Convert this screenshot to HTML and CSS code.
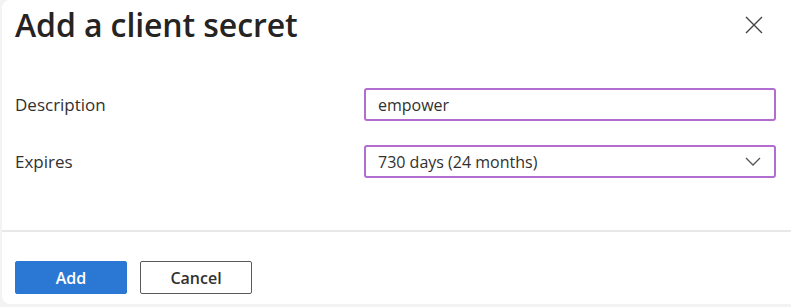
FILE: index.html
```html
<!DOCTYPE html>
<html>
<head>
<meta charset="utf-8">
<link rel="stylesheet" href="styles.css">
</head>
<body>
<div class="panel">
  <div class="header">
    <h1 class="title">Add a client secret</h1>
    <button class="close" aria-label="Close">
      <svg width="18" height="18" viewBox="0 0 18 18"><path d="M1 1 L17 17 M17 1 L1 17" stroke="#444" stroke-width="1.4" fill="none"/></svg>
    </button>
  </div>
  <div class="form">
    <div class="row">
      <label class="label">Description</label>
      <div class="field">empower</div>
    </div>
    <div class="row">
      <label class="label">Expires</label>
      <div class="field select">
        <span>730 days (24 months)</span>
        <svg class="chev" width="16" height="9" viewBox="0 0 16 9"><path d="M1 1 L8 8 L15 1" stroke="#555" stroke-width="1.3" fill="none"/></svg>
      </div>
    </div>
  </div>
  <div class="footer">
    <button class="btn primary">Add</button>
    <button class="btn secondary">Cancel</button>
  </div>
</div>
</body>
</html>
```
FILE: styles.css
```css
html, body {
  margin: 0;
  padding: 0;
  background: #f3f3f3;
  font-family: "Open Sans", "Noto Sans", sans-serif;
  color: #323130;
}
.panel {
  margin-left: 2px;
  width: 800px;
  height: 304px;
  background: #fff;
  border-radius: 8px;
  box-sizing: border-box;
  display: flex;
  flex-direction: column;
}
.header {
  display: flex;
  justify-content: space-between;
  align-items: center;
  height: 50px;
  padding: 0 39px 0 13px;
  box-sizing: border-box;
}
.title {
  margin: 0;
  font-size: 32px;
  font-weight: 600;
  color: #252423;
  letter-spacing: -0.1px;
  line-height: 44px;
}
.close {
  border: none;
  background: none;
  padding: 0;
  width: 18px;
  height: 18px;
  display: flex;
}
.form {
  display: flex;
  flex-direction: column;
  gap: 24px;
  padding: 38px 0 0 13px;
  height: 182px;
  box-sizing: border-box;
  border-bottom: 2px solid #e8e8e8;
}
.row {
  display: flex;
  align-items: center;
}
.label {
  width: 349px;
  font-size: 17px;
  color: #323130;
}
.field {
  width: 412px;
  height: 33px;
  box-sizing: border-box;
  border: 2px solid #b26dd0;
  border-radius: 3px;
  padding: 0 12px;
  display: flex;
  align-items: center;
  font-size: 16px;
  color: #323130;
}
.select {
  justify-content: space-between;
  padding-right: 13px;
}
.footer {
  display: flex;
  gap: 13px;
  padding: 29px 0 0 13px;
}
.btn {
  width: 112px;
  height: 33px;
  border-radius: 2px;
  font-family: "Open Sans", "Noto Sans", sans-serif;
  font-size: 16px;
  font-weight: 600;
  box-sizing: border-box;
}
.primary {
  background: #2b78d4;
  border: 1px solid #2b78d4;
  color: #fff;
}
.secondary {
  background: #fff;
  border: 1px solid #5a5a5a;
  color: #323130;
}
```
